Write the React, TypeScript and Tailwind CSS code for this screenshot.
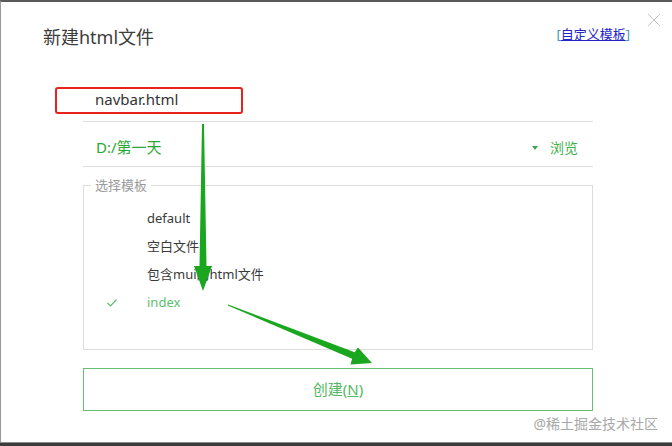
import React from "react";

const font = { fontFamily: '"Noto Sans", "Noto Sans CJK SC", sans-serif' };

export default function App() {
  return (
    <div className="w-[672px] h-[446px] flex flex-col bg-white overflow-hidden" style={font}>
      <div className="relative flex-1 flex flex-col border-t-2 border-l border-t-[#5a5a5a] border-l-[#9a9a9a]">
        {/* close */}
        <svg className="absolute right-[11px] top-[11px]" width="14" height="14" viewBox="0 0 14 14">
          <path d="M1 1 L13 13 M13 1 L1 13" stroke="#c8c8c8" strokeWidth="1" />
        </svg>

        {/* header */}
        <div className="flex items-start justify-between pl-[42px] pr-[42px] pt-[22px]">
          <div className="text-[18px] leading-[26px] text-[#3c3c3c]">新建html文件</div>
          <div className="text-[13px] leading-[20px]">
            <span className="text-[#3a9ab0]">[</span>
            <span className="text-[#2323c8] underline">自定义模板</span>
            <span className="text-[#3a9ab0]">]</span>
          </div>
        </div>

        {/* form */}
        <div className="ml-[82px] w-[510px] mt-[28px] flex flex-col">
          <div className="relative h-[44px] flex items-center pl-[12px] border-b border-[#dedede]">
            <span className="text-[15px] text-[#333]">navbar.html</span>
            <div className="absolute left-[-28px] top-[9px] w-[188px] h-[27px] border-2 border-[#e6231c] rounded-[3px]" />
          </div>
          <div className="h-[45px] flex items-center pl-[13px] pr-[15px] border-b border-[#dedede] pt-[7px]">
            <span className="text-[15px] text-[#27a832] flex-1">D:/第一天</span>
            <svg width="6" height="4" viewBox="0 0 6 4" className="mr-[12px]">
              <path d="M0 0 L6 0 L3 4 Z" fill="#3aa84a" />
            </svg>
            <span className="text-[14px] text-[#3fb04c]">浏览</span>
          </div>

          <fieldset className="mt-[10px] h-[173px] border border-[#dcdcdc] px-0">
            <legend className="ml-[7px] px-[4px] text-[13px] leading-[16px] text-[#9a9a9a]">选择模板</legend>
            <div className="flex flex-col pt-[12px]">
              {[
                { t: "default", on: false },
                { t: "空白文件", on: false },
                { t: "包含mui的html文件", on: false },
                { t: "index", on: true },
              ].map((it) => (
                <div key={it.t} className="h-[28px] flex items-center">
                  <div className="w-[63px] flex justify-end pr-[30px]">
                    {it.on && (
                      <svg width="10" height="8" viewBox="0 0 10 8">
                        <path d="M0.5 4 L3.5 7 L9.5 0.5" stroke="#5bbf6e" strokeWidth="1.2" fill="none" />
                      </svg>
                    )}
                  </div>
                  <span className={`text-[13px] ${it.on ? "text-[#5bbf6e]" : "text-[#3a3a3a]"}`}>{it.t}</span>
                </div>
              ))}
            </div>
          </fieldset>

          <div className="mt-[18px] h-[43px] border border-[#66bf74] flex items-center justify-center">
            <span className="text-[15px] text-[#55b864]">
              创建(<span className="underline">N</span>)
            </span>
          </div>
        </div>

        {/* watermark */}
        <div className="absolute right-[14px] bottom-[8px] text-[14px] text-[#a8a8a8]">@稀土掘金技术社区</div>

        {/* annotation arrows */}
        <svg className="absolute left-[-1px] top-[-2px] pointer-events-none" width="672" height="443" viewBox="0 0 672 443">
          <polygon points="202,124 204,124 206.5,266 212,266 203,291 194,266 199.5,266" fill="#1ba61f" />
          <polygon points="228.2,304.5 354.7,352.2 358,347.5 372,363 350.5,364.5 352.1,358.8 227.8,305.5" fill="#1ba61f" />
        </svg>
      </div>
      <div className="h-[1px] bg-[#8a8a8a]" />
      <div className="h-[3px] bg-[#3b3b3b]" />
    </div>
  );
}
